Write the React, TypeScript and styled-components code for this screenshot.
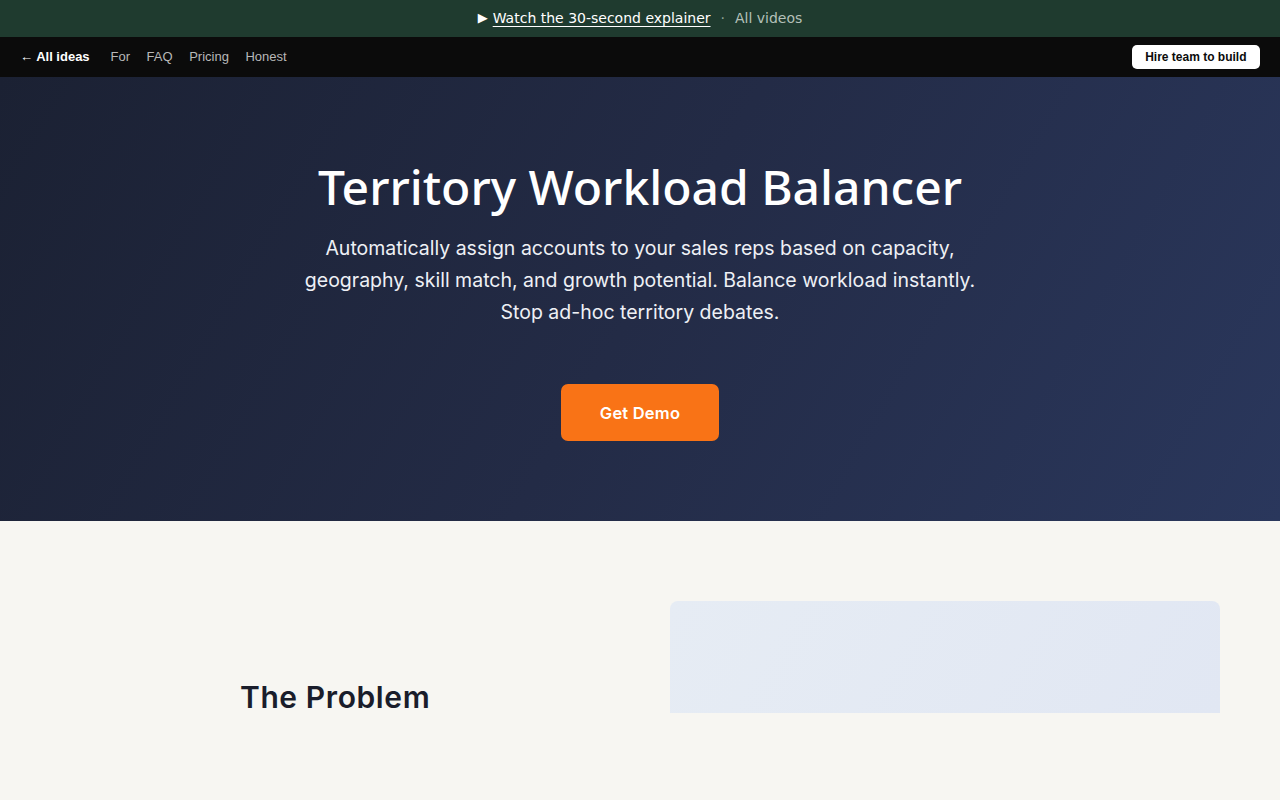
import React from "react";
import styled, { createGlobalStyle } from "styled-components";

const Global = createGlobalStyle`
  html, body { margin: 0; padding: 0; }
  body { background: #f7f6f2; font-family: "Liberation Sans", Arial, sans-serif; }
  * { box-sizing: border-box; }
`;

const Banner = styled.div`
  height: 37px;
  background: #1f3b2f;
  display: flex;
  align-items: center;
  justify-content: center;
  gap: 10px;
  padding-bottom: 2px;
  font-family: "DejaVu Sans", sans-serif;
  font-size: 14px;
  color: #ffffff;
`;

const BannerMain = styled.span`
  display: inline-flex;
  align-items: center;
  gap: 5px;
`;

const Play = styled.span`
  color: #ffffff;
  font-size: 13px;
`;

const BannerLink = styled.a`
  color: #ffffff;
  text-decoration: underline;
  text-underline-offset: 3px;
`;

const Dot = styled.span`
  color: #8fa398;
`;

const Muted = styled.a`
  color: #b4c0b9;
  text-decoration: none;
`;

const Nav = styled.nav`
  height: 40px;
  background: #0b0b0b;
  display: flex;
  align-items: center;
  justify-content: space-between;
  padding: 0 20px 1px;
`;

const NavLeft = styled.div`
  display: flex;
  align-items: center;
`;

const NavLink = styled.a<{ $strong?: boolean }>`
  font-size: 13px;
  color: ${(p) => (p.$strong ? "#ffffff" : "#b8b8b8")};
  font-weight: ${(p) => (p.$strong ? 700 : 400)};
  text-decoration: none;
  margin-right: ${(p) => (p.$strong ? "21px" : "16.5px")};
`;

const HireButton = styled.button`
  background: #ffffff;
  color: #0b0b0b;
  border: none;
  border-radius: 5px;
  font-family: "Liberation Sans", Arial, sans-serif;
  font-weight: 700;
  font-size: 12px;
  height: 24px;
  padding: 0 13.5px;
  margin-top: 1px;
`;

const Hero = styled.section`
  height: 444px;
  background: linear-gradient(120deg, #1b2133 0%, #232b46 50%, #2a375c 100%);
  display: flex;
  flex-direction: column;
  align-items: center;
  padding-top: 78px;
  color: #ffffff;
  text-align: center;
`;

const Title = styled.h1`
  margin: 0;
  font-family: "Noto Sans", sans-serif;
  font-weight: 500;
  font-size: 48px;
  line-height: 64px;
`;

const Sub = styled.p`
  margin: 13px 0 0;
  font-family: Inter, sans-serif;
  font-size: 19.5px;
  line-height: 32px;
  color: #eef0f5;
  max-width: 680px;
`;

const Cta = styled.button`
  margin-top: 56px;
  width: 158px;
  height: 57px;
  background: #f97316;
  color: #ffffff;
  border: none;
  border-radius: 7px;
  font-family: Inter, sans-serif;
  font-weight: 600;
  font-size: 16.5px;
  letter-spacing: 0.2px;
`;

const Lower = styled.section`
  background: #f7f6f2;
  height: 279px;
  padding: 80px 60px 0 240px;
  display: grid;
  grid-template-columns: 1fr 550px;
  align-items: start;
`;

const ProblemTitle = styled.h2`
  margin: 78px 0 0;
  font-family: Inter, sans-serif;
  font-weight: 600;
  font-size: 30px;
  letter-spacing: 0.6px;
  color: #1a1d2b;
`;

const Panel = styled.div`
  height: 112px;
  border-radius: 8px 8px 0 0;
  background: linear-gradient(120deg, #e6ecf4 0%, #e1e7f3 100%);
`;

export default function App() {
  return (
    <>
      <Global />
      <Banner>
        <BannerMain>
          <Play>▶</Play>
          <BannerLink href="#">Watch the 30-second explainer</BannerLink>
        </BannerMain>
        <Dot>·</Dot>
        <Muted href="#">All videos</Muted>
      </Banner>
      <Nav>
        <NavLeft>
          <NavLink $strong href="#">← All ideas</NavLink>
          <NavLink href="#">For</NavLink>
          <NavLink href="#">FAQ</NavLink>
          <NavLink href="#">Pricing</NavLink>
          <NavLink href="#">Honest</NavLink>
        </NavLeft>
        <HireButton>Hire team to build</HireButton>
      </Nav>
      <Hero>
        <Title>Territory Workload Balancer</Title>
        <Sub>
          Automatically assign accounts to your sales reps based on capacity,
          geography, skill match, and growth potential. Balance workload
          instantly. Stop ad-hoc territory debates.
        </Sub>
        <Cta>Get Demo</Cta>
      </Hero>
      <Lower>
        <ProblemTitle>The Problem</ProblemTitle>
        <Panel />
      </Lower>
    </>
  );
}
